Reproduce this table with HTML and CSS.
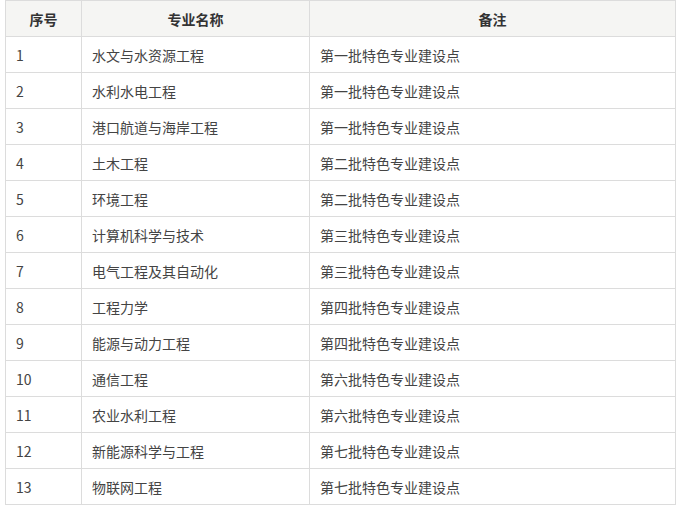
FILE: index.html
```html
<!DOCTYPE html>
<html lang="zh">
<head>
<meta charset="utf-8">
<link rel="stylesheet" href="styles.css">
</head>
<body>
<table class="majors">
  <colgroup>
    <col class="c1"><col class="c2"><col class="c3">
  </colgroup>
  <thead>
    <tr><th>序号</th><th>专业名称</th><th>备注</th></tr>
  </thead>
  <tbody>
    <tr><td>1</td><td>水文与水资源工程</td><td>第一批特色专业建设点</td></tr>
    <tr><td>2</td><td>水利水电工程</td><td>第一批特色专业建设点</td></tr>
    <tr><td>3</td><td>港口航道与海岸工程</td><td>第一批特色专业建设点</td></tr>
    <tr><td>4</td><td>土木工程</td><td>第二批特色专业建设点</td></tr>
    <tr><td>5</td><td>环境工程</td><td>第二批特色专业建设点</td></tr>
    <tr><td>6</td><td>计算机科学与技术</td><td>第三批特色专业建设点</td></tr>
    <tr><td>7</td><td>电气工程及其自动化</td><td>第三批特色专业建设点</td></tr>
    <tr><td>8</td><td>工程力学</td><td>第四批特色专业建设点</td></tr>
    <tr><td>9</td><td>能源与动力工程</td><td>第四批特色专业建设点</td></tr>
    <tr><td>10</td><td>通信工程</td><td>第六批特色专业建设点</td></tr>
    <tr><td>11</td><td>农业水利工程</td><td>第六批特色专业建设点</td></tr>
    <tr><td>12</td><td>新能源科学与工程</td><td>第七批特色专业建设点</td></tr>
    <tr><td>13</td><td>物联网工程</td><td>第七批特色专业建设点</td></tr>
  </tbody>
</table>
</body>
</html>
```
FILE: styles.css
```css
html, body {
  margin: 0;
  padding: 0;
  background: #ffffff;
}
body {
  font-family: "Noto Sans CJK SC", "Noto Sans", sans-serif;
  font-size: 14px;
  color: #444444;
}
.majors {
  margin-left: 5px;
  border-collapse: collapse;
  table-layout: fixed;
  width: 670px;
}
.c1 { width: 76px; }
.c2 { width: 228px; }
.c3 { width: 366px; }
.majors th,
.majors td {
  border: 1px solid #dcdcdc;
  height: 36px;
  padding: 0 10px;
  line-height: 20px;
  vertical-align: middle;
  box-sizing: border-box;
}
.majors th {
  background: #f5f5f3;
  font-weight: bold;
  color: #333333;
  text-align: center;
}
.majors td {
  text-align: left;
}
```
